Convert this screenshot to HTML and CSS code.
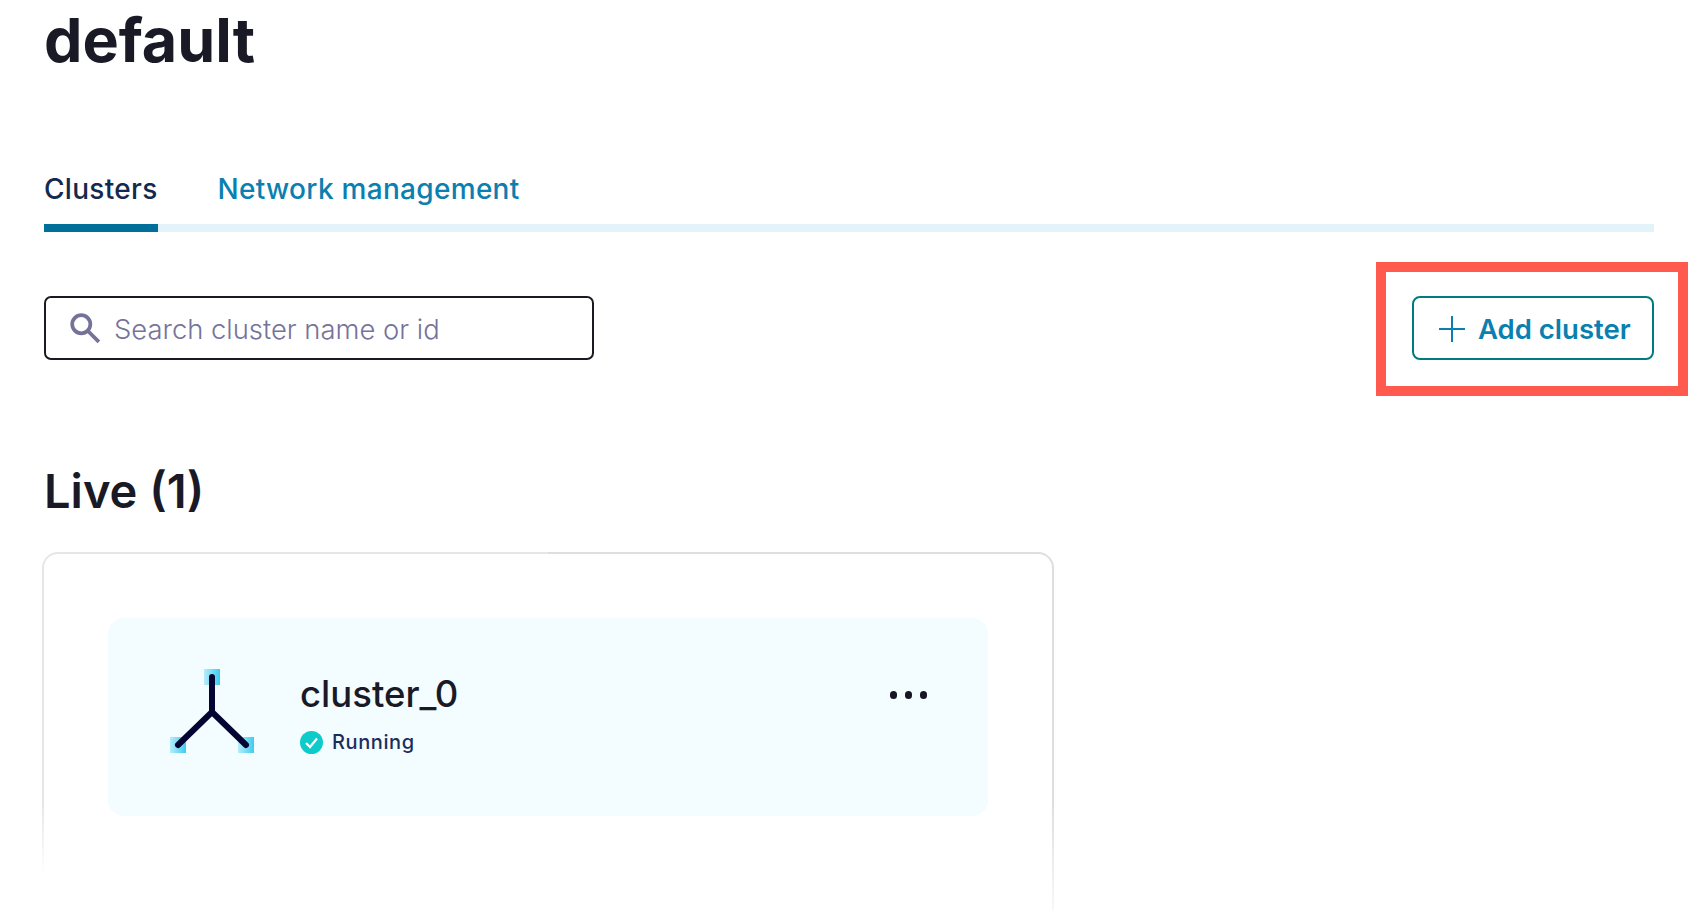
FILE: index.html
```html
<!DOCTYPE html>
<html lang="en">
<head>
<meta charset="utf-8">
<title>default</title>
<link rel="stylesheet" href="styles.css">
</head>
<body>
<main class="page">
  <h1 class="title">default</h1>
  <nav class="tabs">
    <a class="tab tab-active">Clusters</a>
    <a class="tab">Network management</a>
  </nav>
  <div class="toolbar">
    <label class="search">
      <svg class="search-icon" viewBox="0 0 30 30" aria-hidden="true"><circle cx="11.5" cy="11.5" r="8.5"/><path d="M18 18l10 10"/></svg>
      <input class="search-input" type="text" placeholder="Search cluster name or id">
    </label>
    <div class="add-wrap">
      <button class="add-btn" type="button">
        <svg class="plus" viewBox="0 0 28 28" aria-hidden="true"><path d="M14 1v26M1 14h26"/></svg>
        <span>Add cluster</span>
      </button>
      <span class="highlight"></span>
    </div>
  </div>
  <h2 class="section">Live (1)</h2>
  <section class="card">
    <div class="panel">
      <svg class="cluster-icon" viewBox="0 0 84 84" aria-hidden="true">
        <defs><linearGradient id="sq"><stop offset="0" stop-color="#b8ecfb"/><stop offset="1" stop-color="#3ccdee"/></linearGradient></defs>
        <rect x="34" y="0" width="16" height="16" fill="url(#sq)"/>
        <rect x="0" y="68" width="16" height="16" fill="url(#sq)"/>
        <rect x="68" y="68" width="16" height="16" fill="url(#sq)"/>
        <path class="cluster-lines" d="M42 8v35L8 76M42 43l34 33"/>
      </svg>
      <div class="info">
        <div class="name">cluster_0</div>
        <div class="status">
          <svg class="check" viewBox="0 0 23 23" aria-hidden="true"><circle cx="11.5" cy="11.5" r="11.5"/><path d="M6 12l4 4 7-8.500"/></svg>
          <span>Running</span>
        </div>
      </div>
      <div class="dots"><i></i><i></i><i></i></div>
    </div>
  </section>
</main>
</body>
</html>
```
FILE: styles.css
```css
* { box-sizing: border-box; }
html, body { margin: 0; height: 100%; overflow: hidden; background: #fff; }
body { font-family: Inter, "Noto Sans", sans-serif; color: #1a1a26; }
.page { padding: 0 46px 0 44px; height: 910px; overflow: hidden; }
.title { margin: 0; padding-top: 4px; font-size: 61px; line-height: 72px; font-weight: 700; }
.tabs { display: flex; align-items: flex-start; gap: 60px; margin-top: 96px; height: 60px; border-bottom: 8px solid #e3f3fa; }
.tab { font-size: 28px; line-height: 34px; font-weight: 500; color: #0a7fb0; letter-spacing: .3px; }
.tab-active { color: #14294f; height: 60px; border-bottom: 8px solid #006f99; }
.toolbar { display: flex; justify-content: space-between; margin-top: 64px; }
.search { width: 550px; height: 64px; border: 2px solid #1a1a26; border-radius: 7px; display: flex; align-items: center; padding-left: 23px; gap: 13px; }
.search-icon { width: 32px; height: 32px; fill: none; stroke: #75729a; stroke-width: 3.500; flex: none; }
.search-input { border: 0; outline: 0; padding: 2px 0 0; flex: 1; min-width: 0; background: none; font: 300 27.400px Inter, sans-serif; color: #1a1a26; }
.search-input::placeholder { color: #76739a; opacity: 1; }
.add-wrap { position: relative; }
.add-btn { width: 242px; height: 64px; border: 2px solid #007b80; border-radius: 8px; background: #fff; display: flex; align-items: center; padding: 2px 0 0 24px; gap: 12px; font: 600 27.500px Inter, sans-serif; color: #0a7fb0; }
.plus { width: 28px; height: 28px; fill: none; stroke: #0a7fb0; stroke-width: 2; flex: none; }
.highlight { position: absolute; left: -36px; top: -34px; width: 312px; height: 134px; border: 10px solid #ff5a4d; }
.section { margin: 103px 0 0; font-size: 47px; line-height: 56px; font-weight: 600; }
.card { width: 1012px; height: 358px; margin-top: 33px; margin-left: -2px; padding: 64px 64px 0; border: 2px solid transparent; border-bottom: 0; border-radius: 16px 16px 0 0;
  background:
    linear-gradient(#fff, #fff) padding-box,
    linear-gradient(#e6e6e6 70%, #fff 90%) left top / 50% 100% no-repeat border-box,
    linear-gradient(#dedede 70%, #f8f8f8 100%) right top / 50% 100% no-repeat border-box; }
.panel { height: 198px; background: #f3fcff; border-radius: 16px; display: flex; align-items: flex-start; padding: 0 61px 0 62px; }
.cluster-icon { width: 84px; height: 84px; flex: none; margin-top: 51px; }
.cluster-lines { fill: none; stroke: #050533; stroke-width: 6; stroke-linecap: round; stroke-linejoin: round; }
.info { margin-left: 46px; flex: 1; padding-top: 54px; }
.name { font-size: 36.500px; line-height: 44px; font-weight: 500; }
.status { display: flex; align-items: center; gap: 9px; margin-top: 14px; font-size: 20px; line-height: 24px; font-weight: 500; color: #1b2d5b; letter-spacing: .6px; }
.check { width: 23px; height: 23px; flex: none; }
.check circle { fill: #0ccbc8; }
.check path { fill: none; stroke: #fff; stroke-width: 2.200; }
.dots { display: flex; gap: 7.500px; margin-top: 73px; }
.dots i { width: 7.500px; height: 7.500px; border-radius: 50%; background: #161625; }
```
